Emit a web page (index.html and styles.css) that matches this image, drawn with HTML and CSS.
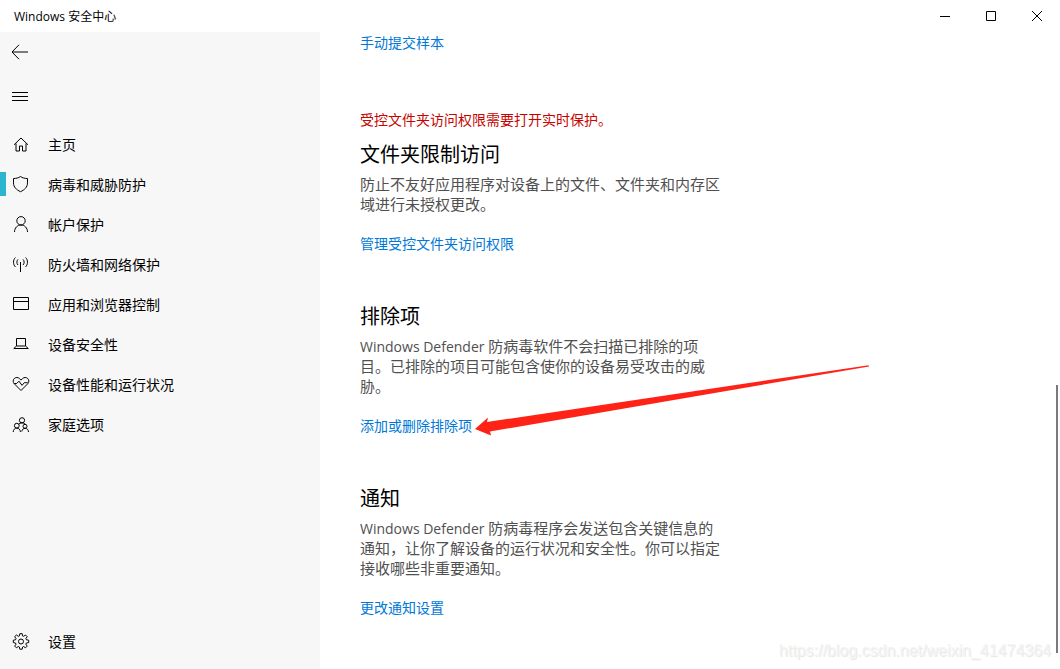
FILE: index.html
```html
<!DOCTYPE html>
<html lang="zh-CN">
<head>
<meta charset="utf-8">
<meta name="viewport" content="width=device-width, initial-scale=1">
<title>Windows 安全中心</title>
<link rel="stylesheet" href="styles.css">
</head>
<body>
<div class="window">
  <header class="titlebar">
    <span class="title">Windows 安全中心</span>
    <div class="controls">
      <button class="control" aria-label="最小化"><svg width="10" height="10" viewBox="0 0 10 10"><path d="M0 5.5h10"/></svg></button>
      <button class="control" aria-label="最大化"><svg width="10" height="10" viewBox="0 0 10 10"><path d="M.5.5h9v9h-9z"/></svg></button>
      <button class="control" aria-label="关闭"><svg width="10" height="10" viewBox="0 0 10 10"><path d="M0 0l10 10M10 0L0 10"/></svg></button>
    </div>
  </header>
  <div class="body">
    <nav class="sidebar">
      <button class="tool" aria-label="返回"><svg class="icon" viewBox="0 0 18 18"><path d="M17 9H1.500M8 1.800L1 9l7 7.200"/></svg></button>
      <button class="tool" aria-label="菜单"><svg class="icon" viewBox="0 0 18 18"><path d="M1 5.500h16M1 9.500h16M1 13.500h16"/></svg></button>
      <a class="item first" href="#"><svg class="icon" viewBox="0 0 18 18"><path d="M2 8.800L9 2l7 6.800M4 7.500v7.500h3.500v-5h3v5H14V7.500"/></svg>主页</a>
      <a class="item active" href="#"><svg class="icon" viewBox="0 0 18 18"><path d="M8.500 .5C6.500 2 4 2.500 1.500 2.500v4.300c0 4.500 3 7 7 8.900 4-1.900 7-4.400 7-8.900V2.500C13 2.500 10.500 2 8.500 .5z"/></svg>病毒和威胁防护</a>
      <a class="item" href="#"><svg class="icon" viewBox="0 0 18 18"><circle cx="9" cy="4.800" r="4.200"/><path d="M2.500 16c0-4 2.800-7 6.500-7s6.500 3 6.500 7"/></svg>帐户保护</a>
      <a class="item" href="#"><svg class="icon" viewBox="0 0 18 18"><path d="M8.500 6v10M3.400 1.500c-2.500 2.400-2.500 7 0 9.400M13.600 1.500c2.500 2.400 2.500 7 0 9.400M6 3.400c-1.500 1.500-1.500 4.100 0 5.600M11 3.400c1.500 1.500 1.500 4.100 0 5.600"/></svg>防火墙和网络保护</a>
      <a class="item" href="#"><svg class="icon" viewBox="0 0 18 18"><path d="M1.500 1.500h15v12h-15zM1.500 5.500h15"/></svg>应用和浏览器控制</a>
      <a class="item" href="#"><svg class="icon" viewBox="0 0 18 18"><path d="M4.500 10V2.500h9V10M4.500 10h9l2.800 2.500H1.800z"/></svg>设备安全性</a>
      <a class="item" href="#"><svg class="icon" viewBox="0 0 18 18"><path d="M9 14.500L2.200 7.700C.8 6.200.8 4 2.200 2.600c1.500-1.500 3.900-1.500 5.300 0L9 4.100l1.500-1.500c1.400-1.500 3.800-1.500 5.300 0 1.400 1.400 1.400 3.600 0 5.100zM2.200 7.500h2.500L7 5.200l3 4.200 2.300-2.700h3.500"/></svg>设备性能和运行状况</a>
      <a class="item" href="#"><svg class="icon" viewBox="0 0 18 18"><circle cx="10" cy="4.300" r="2.600"/><circle cx="4.800" cy="9.700" r="2.400"/><circle cx="13" cy="10.300" r="2"/><path d="M1.200 16c0-2.300 1.600-3.900 3.600-3.900s3.600 1.600 3.600 3.900M9.800 15.500c.3-2 1.600-3.200 3.200-3.200 2 0 3.500 1.500 3.500 3.700M6.600 8.300C7.300 7.400 8.500 6.900 10 6.900c1.700 0 2.900.7 3.700 1.800"/></svg>家庭选项</a>
      <a class="item settings" href="#"><svg class="icon" viewBox="0 0 18 18"><circle cx="9" cy="8.500" r="2.500"/><path d="M7.800 .7h2.400l.4 2.200 1 .4 1.900-1.300 1.700 1.700-1.300 1.900.5 1.200 2.300.4v2.400l-2.300.4-.5 1.200 1.300 1.900-1.700 1.700-1.900-1.300-1 .5-.4 2.200H7.800l-.4-2.200-1.100-.5-1.900 1.300-1.700-1.700L4 11.200l-.5-1.200-2.200-.4V7.200l2.200-.4L4 5.600 2.700 3.700l1.700-1.700 1.900 1.300 1.100-.4z"/></svg>设置</a>
    </nav>
    <main class="content">
      <a class="link" href="#">手动提交样本</a>
      <section class="section folder">
        <p class="warning">受控文件夹访问权限需要打开实时保护。</p>
        <h2 class="heading">文件夹限制访问</h2>
        <p class="text">防止不友好应用程序对设备上的文件、文件夹和内存区域进行未授权更改。</p>
        <a class="link" href="#">管理受控文件夹访问权限</a>
      </section>
      <section class="section">
        <h2 class="heading">排除项</h2>
        <p class="text"><span class="latin">Windows Defender </span>防病毒软件不会扫描已排除的项目。已排除的项目可能包含使你的设备易受攻击的威胁。</p>
        <a class="link target" href="#">添加或删除排除项<svg class="arrow" width="396" height="72" viewBox="0 0 396 72"><path d="M1 65L14 53.500l-1 4.500L393 1.500h2v1L16 67.500l1 4z"/></svg></a>
      </section>
      <section class="section">
        <h2 class="heading">通知</h2>
        <p class="text"><span class="latin">Windows Defender </span>防病毒程序会发送包含关键信息的通知，让你了解设备的运行状况和安全性。你可以指定接收哪些非重要通知。</p>
        <a class="link" href="#">更改通知设置</a>
      </section>
    </main>
  </div>
  <div class="scrollbar"></div>
  <div class="watermark">https://blog.csdn.net/weixin_41474364</div>
</div>
</body>
</html>
```
FILE: styles.css
```css
* {
  box-sizing: border-box;
}

body {
  margin: 0;
  background: #fff;
  color: #000;
  font-family: "Open Sans", "Noto Sans CJK SC", sans-serif;
  font-size: 14px;
  line-height: 20px;
}

a {
  text-decoration: none;
}

button {
  padding: 0;
  border: 0;
  background: none;
}

svg {
  display: block;
  fill: none;
  stroke: #000;
}

.window {
  position: relative;
  display: flex;
  flex-direction: column;
  height: 100vh;
  overflow: hidden;
}

.titlebar {
  display: flex;
  flex: none;
  align-items: center;
  justify-content: space-between;
  height: 32px;
  padding-left: 14px;
  font-size: 12px;
}

.title {
  padding-top: 2px;
}

.controls {
  display: flex;
}

.control {
  display: grid;
  place-items: center;
  width: 46px;
  height: 32px;
}

.body {
  display: flex;
  flex: 1;
  min-height: 0;
}

.sidebar {
  display: flex;
  flex: none;
  flex-direction: column;
  width: 320px;
  padding-bottom: 7px;
  background: #f7f7f7;
}

.tool {
  display: flex;
  align-items: center;
  height: 40px;
  margin-bottom: 4px;
  padding-left: 11px;
}

.icon {
  flex: none;
  width: 18px;
  height: 18px;
}

.item {
  display: flex;
  flex: none;
  align-items: center;
  gap: 18px;
  height: 40px;
  padding-left: 12px;
  color: #000;
}

.first {
  margin-top: 5px;
}

.active {
  background: linear-gradient(#2cb5cc, #2cb5cc) 0 7px / 6px 24px no-repeat;
}

.settings {
  margin-top: auto;
}

.content {
  flex: 1;
  min-width: 0;
  padding: 1px 40px;
}

.section {
  max-width: 364px;
  margin-top: 49px;
}

.folder {
  margin-top: 57px;
}

.link {
  display: block;
  width: fit-content;
  color: #0078d7;
}

.warning {
  margin: 0 0 11px;
  color: #c50500;
}

.heading {
  margin: 0 0 5px;
  font-size: 20px;
  font-weight: 400;
  line-height: 28px;
}

.text {
  margin: 0 0 20px;
  color: #505050;
  font-size: 15px;
}

.latin {
  font-size: 14px;
  line-height: 16px;
}

.target {
  position: relative;
}

.arrow {
  position: absolute;
  bottom: 0;
  left: 100%;
  margin-left: 2px;
  fill: #ff2216;
  stroke: none;
}

.scrollbar {
  position: absolute;
  right: 2px;
  bottom: 16px;
  width: 2px;
  height: 40%;
  background: #7a7a7a;
}

.watermark {
  position: absolute;
  right: 9px;
  bottom: 8px;
  color: #f4f4f4;
  font-family: "Liberation Sans", sans-serif;
  font-size: 16px;
  text-shadow: 1px 1px 1px #e4e4e4;
}
```
